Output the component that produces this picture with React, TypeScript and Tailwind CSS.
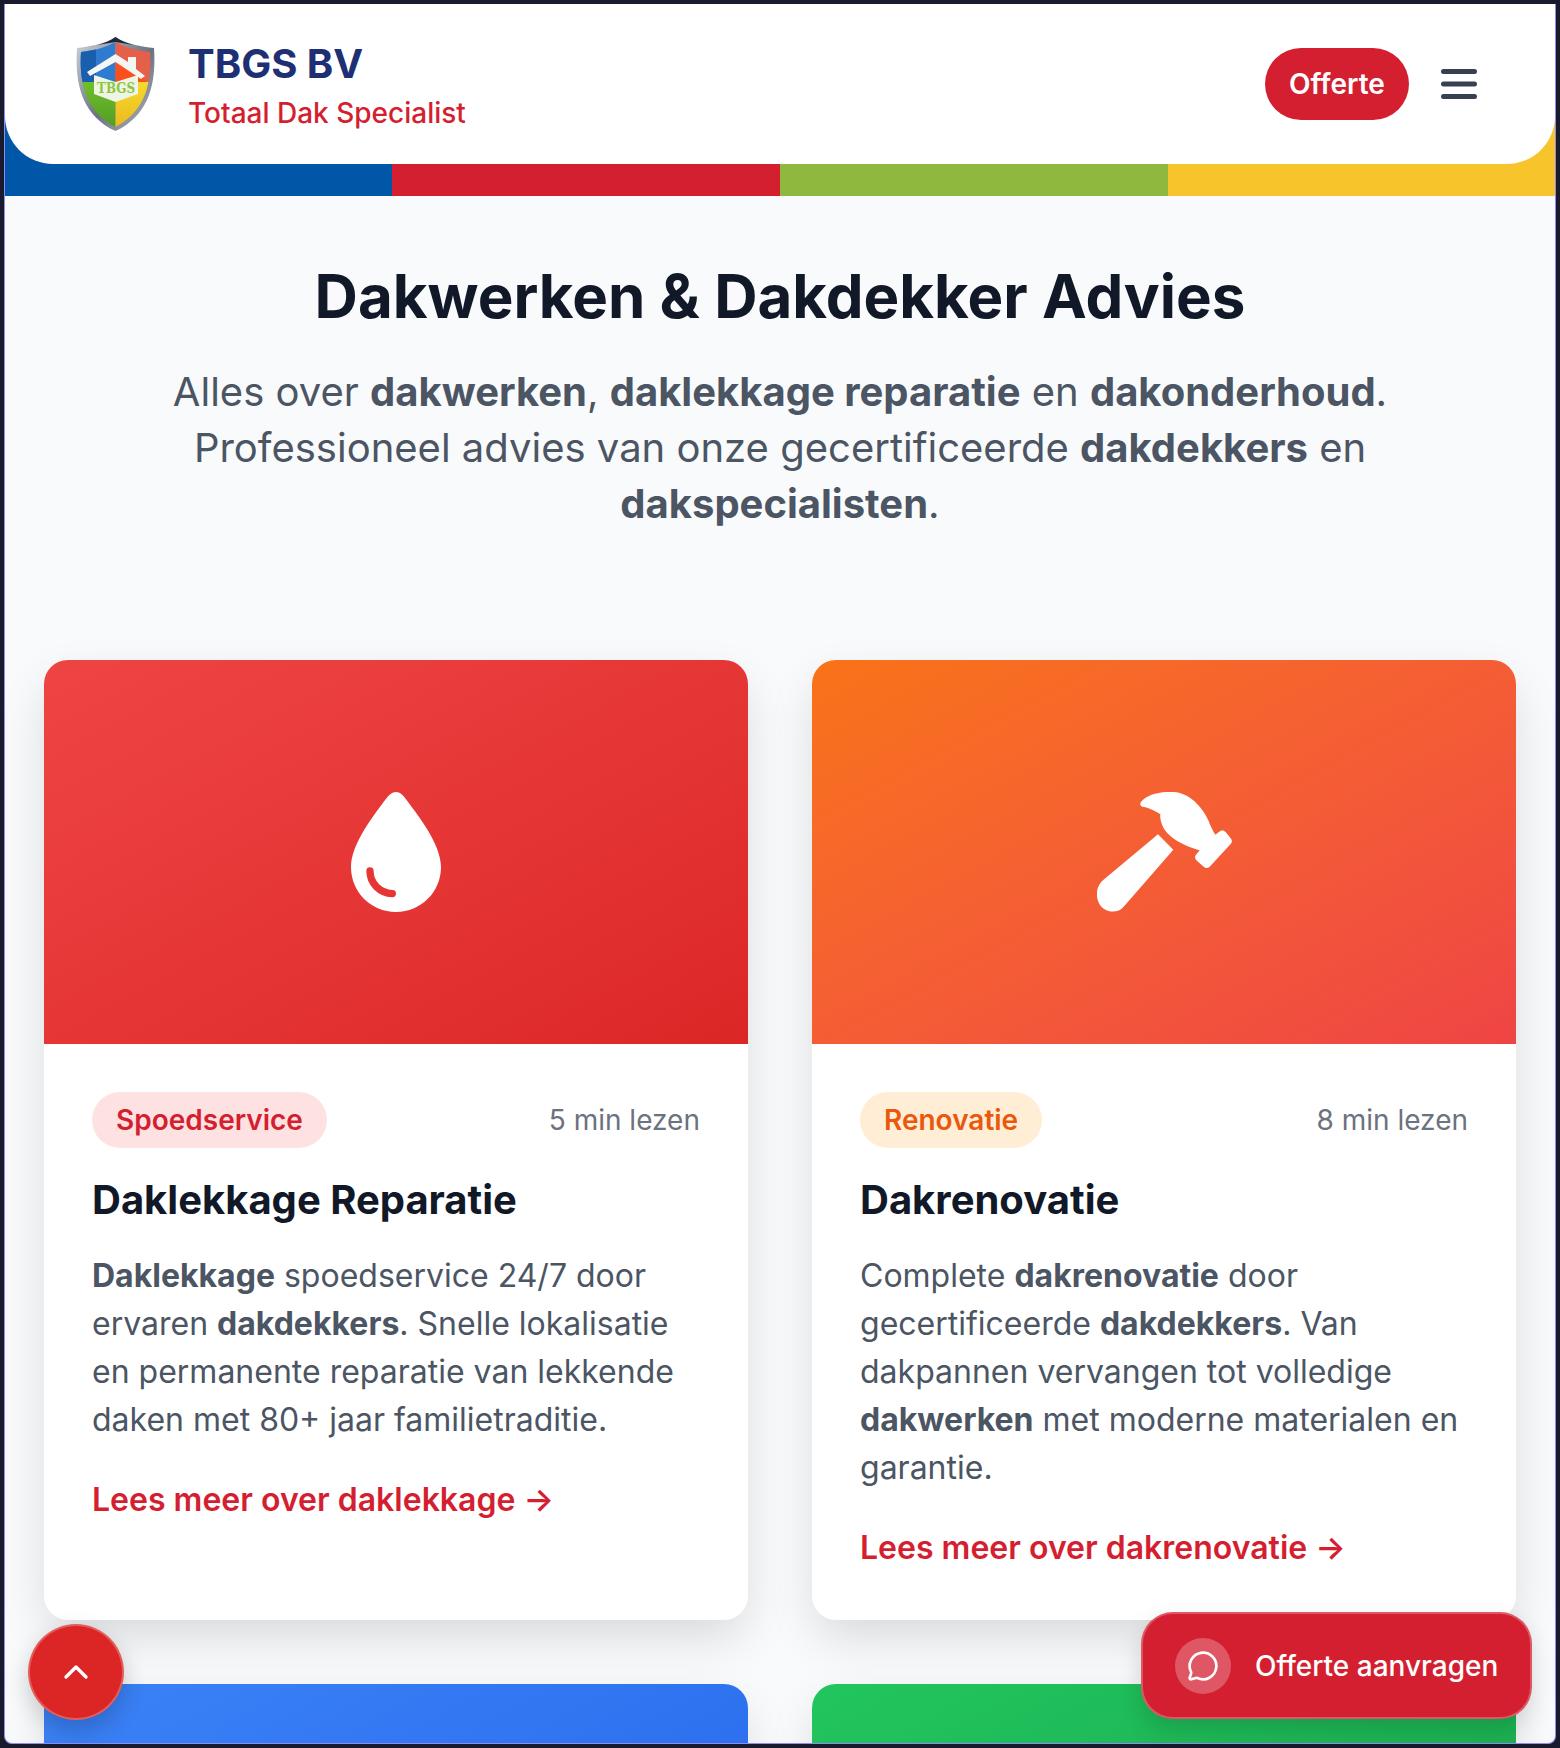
import React from "react";
import { ChevronUp, MessageCircle } from "lucide-react";

function Shield() {
  return (
    <svg width="80" height="96" viewBox="0 0 80 96" className="shrink-0 ml-[1px]">
      <defs>
        <clipPath id="sh"><path d="M39.5 6C29 12 15 15 5 16C3.5 40 6 74 39.5 91C73 74 75.5 40 74 16C64 15 50 12 39.5 6Z" /></clipPath>
        <linearGradient id="rim" x1="0" y1="0" x2="1" y2="1"><stop offset="0" stopColor="#d1d5db" /><stop offset=".55" stopColor="#6b7280" /><stop offset="1" stopColor="#b6bbc2" /></linearGradient>
        <linearGradient id="gr" x1="0" y1="0" x2="0" y2="1"><stop offset="0" stopColor="#6fbf2c" /><stop offset="1" stopColor="#4e9a22" /></linearGradient>
        <linearGradient id="ye" x1="0" y1="0" x2="0" y2="1"><stop offset="0" stopColor="#f6d92b" /><stop offset="1" stopColor="#e9b71d" /></linearGradient>
      </defs>
      <path d="M39.5 1C29 8 13 11 1 12C-1 42 3 78 39.5 95C76 78 80 42 78 12C66 11 50 8 39.5 1Z" fill="url(#rim)" />
      <path d="M39.5 1C29 8 18 10 9 11L39.5 6L70 11C61 10 50 8 39.5 1Z" fill="#1f2937" />
      <g clipPath="url(#sh)">
        <rect x="0" y="0" width="39.5" height="46" fill="#2f7bd0" />
        <rect x="0" y="0" width="20" height="46" fill="#1a5fae" />
        <rect x="39.5" y="0" width="40" height="46" fill="#e4604a" />
        <path d="M39.5 18L60 32L70 46H39.5Z" fill="#fb4f1e" />
        <rect x="0" y="46" width="39.5" height="50" fill="url(#gr)" />
        <rect x="39.5" y="46" width="40" height="50" fill="url(#ye)" />
      </g>
      <path d="M11 36L39.5 18L52 26V21H60V33L69 40L65 43L39.5 26L14 40Z" fill="#f4f6f4" />
      <path d="M18 39L39.5 46L62 39V58L39.5 66L18 58Z" fill="#eef5e4" />
      <text x="40" y="57" textAnchor="middle" fontFamily="'DejaVu Serif', serif" fontWeight="700" fontSize="14" fill="#8ec63f" textLength="38" lengthAdjust="spacingAndGlyphs">TBGS</text>
    </svg>
  );
}

function Drop() {
  return (
    <svg width="90" height="120" viewBox="93 65 270 360">
      <path d="M228 65C240 65 250 75 255 83C290 130 363 220 363 290C363 365 303 425 228 425C153 425 93 365 93 290C93 220 165 130 200 83C206 75 216 65 228 65Z" fill="#fff" />
      <path d="M150 302C150 340 180 368 217 370" fill="none" stroke="#e53535" strokeWidth="22" strokeLinecap="round" />
    </svg>
  );
}

function Hammer() {
  return (
    <svg width="135" height="120" viewBox="50 38 405 360">
      <path d="M182 68C200 45 240 36 280 38C325 40 365 80 385 125C390 140 398 155 405 166L420 155C426 152 432 154 436 158L452 178C456 184 455 190 451 194L388 262C383 267 375 267 370 262L348 243C343 238 343 231 347 226L358 213C335 206 300 195 270 170C245 150 238 120 240 105C222 92 200 84 186 82C180 80 178 73 182 68Z" fill="#fff" />
      <path d="M233 165L279 211L130 382C118 396 100 400 82 394C60 386 48 365 50 340C51 322 60 308 75 297Z" fill="#fff" />
    </svg>
  );
}

function Card(p: { grad: string; icon?: React.ReactNode; pill?: string; pillCls?: string; time?: string; title?: string; link?: string; children?: React.ReactNode }) {
  return (
    <article className="bg-white rounded-[24px] overflow-hidden shadow-[0_20px_50px_-5px_rgba(0,0,0,0.14)] flex flex-col">
      <div className={`h-[384px] flex items-center justify-center ${p.grad}`}>{p.icon}</div>
      <div className="p-12 pb-0 h-[576px]">
        <div className="flex items-center justify-between h-14">
          <span className={`h-14 px-6 rounded-full flex items-center text-[28px] font-semibold ${p.pillCls ?? ""}`}>{p.pill}</span>
          <span className="text-[28px] text-[#6b7280]">{p.time}</span>
        </div>
        <h2 className="mt-[24px] text-[40px] leading-[56px] font-bold text-[#111827]">{p.title}</h2>
        <p className="mt-[24px] text-[32px] leading-[48px] text-[#4b5563] [&_strong]:font-bold">{p.children}</p>
        <a className="block mt-[32px] text-[32px] leading-[48px] font-semibold text-[#d41f31]">{p.link}</a>
      </div>
    </article>
  );
}

export default function App() {
  return (
    <div className="w-[1560px] h-[1748px] bg-[#1a1a2e] p-1 font-['Inter',sans-serif] overflow-hidden relative">
      <div className="h-full bg-[#f9fafb] border-x border-b border-[#8f8cf0] rounded-b-lg overflow-hidden">
        <div className="pb-8 bg-[linear-gradient(90deg,#0057a8_25%,#d41f31_25%,#d41f31_50%,#8fb93e_50%,#8fb93e_75.05%,#f8c42c_75.05%)]">
          <header className="h-[160px] bg-white rounded-b-[48px] flex items-center justify-between pl-[70px] pr-[78px]">
            <div className="flex items-center gap-[32px]">
              <Shield />
              <div className="pt-[5px]">
                <div className="text-[40px] leading-[48px] font-bold text-[#1e2f73]">TBGS BV</div>
                <div className="text-[28px] leading-[40px] mt-[5px] font-medium text-[#d41f31]">Totaal Dak Specialist</div>
              </div>
            </div>
            <div className="flex items-center gap-[32px]">
              <button className="h-[72px] w-[144px] rounded-full bg-[#d41f31] text-white text-[28px] font-semibold">Offerte</button>
              <svg width="36" height="36" viewBox="0 0 36 36" fill="none" stroke="#374151" strokeWidth="5" strokeLinecap="round">
                <path d="M2.5 5.5H33.5M2.5 18H33.5M2.5 30.5H33.5" />
              </svg>
            </div>
          </header>
        </div>
        <section className="pt-[70px] px-[39px]">
          <h1 className="text-center text-[60px] leading-[60px] font-bold text-[#111827]">Dakwerken &amp; Dakdekker Advies</h1>
          <p className="mt-[38px] mx-auto w-[1280px] text-center text-[40px] leading-[56px] text-[#4b5563] [&_strong]:font-bold">
            Alles over <strong>dakwerken</strong>, <strong>daklekkage reparatie</strong> en <strong>dakonderhoud</strong>. Professioneel advies van onze gecertificeerde <strong>dakdekkers</strong> en <strong>dakspecialisten</strong>.
          </p>
          <div className="mt-[128px] grid grid-cols-2 gap-x-16 gap-y-16">
            <Card grad="bg-gradient-to-br from-[#ef4444] to-[#dc2626]" icon={<Drop />} pill="Spoedservice" pillCls="bg-[#fee2e2] text-[#d41f31]" time="5 min lezen" title="Daklekkage Reparatie" link="Lees meer over daklekkage →">
              <strong>Daklekkage</strong> spoedservice 24/7 door ervaren <strong>dakdekkers</strong>. Snelle lokalisatie en permanente reparatie van lekkende daken met 80+ jaar familietraditie.
            </Card>
            <Card grad="bg-gradient-to-br from-[#f97316] to-[#ef4444]" icon={<Hammer />} pill="Renovatie" pillCls="bg-[#ffedd5] text-[#ea580c]" time="8 min lezen" title="Dakrenovatie" link="Lees meer over dakrenovatie →">
              Complete <strong>dakrenovatie</strong> door gecertificeerde <strong>dakdekkers</strong>. Van dakpannen vervangen tot volledige <strong>dakwerken</strong> met moderne materialen en garantie.
            </Card>
            <Card grad="bg-gradient-to-br from-[#3b82f6] to-[#2563eb]" />
            <Card grad="bg-gradient-to-br from-[#22c55e] to-[#16a34a]" />
          </div>
        </section>
      </div>
      <button className="absolute left-[28px] top-[1624px] w-24 h-24 rounded-full bg-[#dc2626] border-2 border-white/25 shadow-[0_10px_25px_rgba(0,0,0,0.2)] flex items-center justify-center">
        <ChevronUp size={40} strokeWidth={2} className="text-white" />
      </button>
      <div className="absolute left-[1141px] top-[1612px] w-[391px] h-[107px] rounded-[32px] bg-[#d41f31] border-2 border-white/25 flex items-center pl-[32px] gap-[24px] shadow-[0_10px_25px_rgba(0,0,0,0.15)]">
        <span className="w-14 h-14 rounded-full bg-white/25 flex items-center justify-center"><MessageCircle size={32} strokeWidth={2} className="text-white" /></span>
        <span className="text-white text-[28px] font-medium">Offerte aanvragen</span>
      </div>
    </div>
  );
}
